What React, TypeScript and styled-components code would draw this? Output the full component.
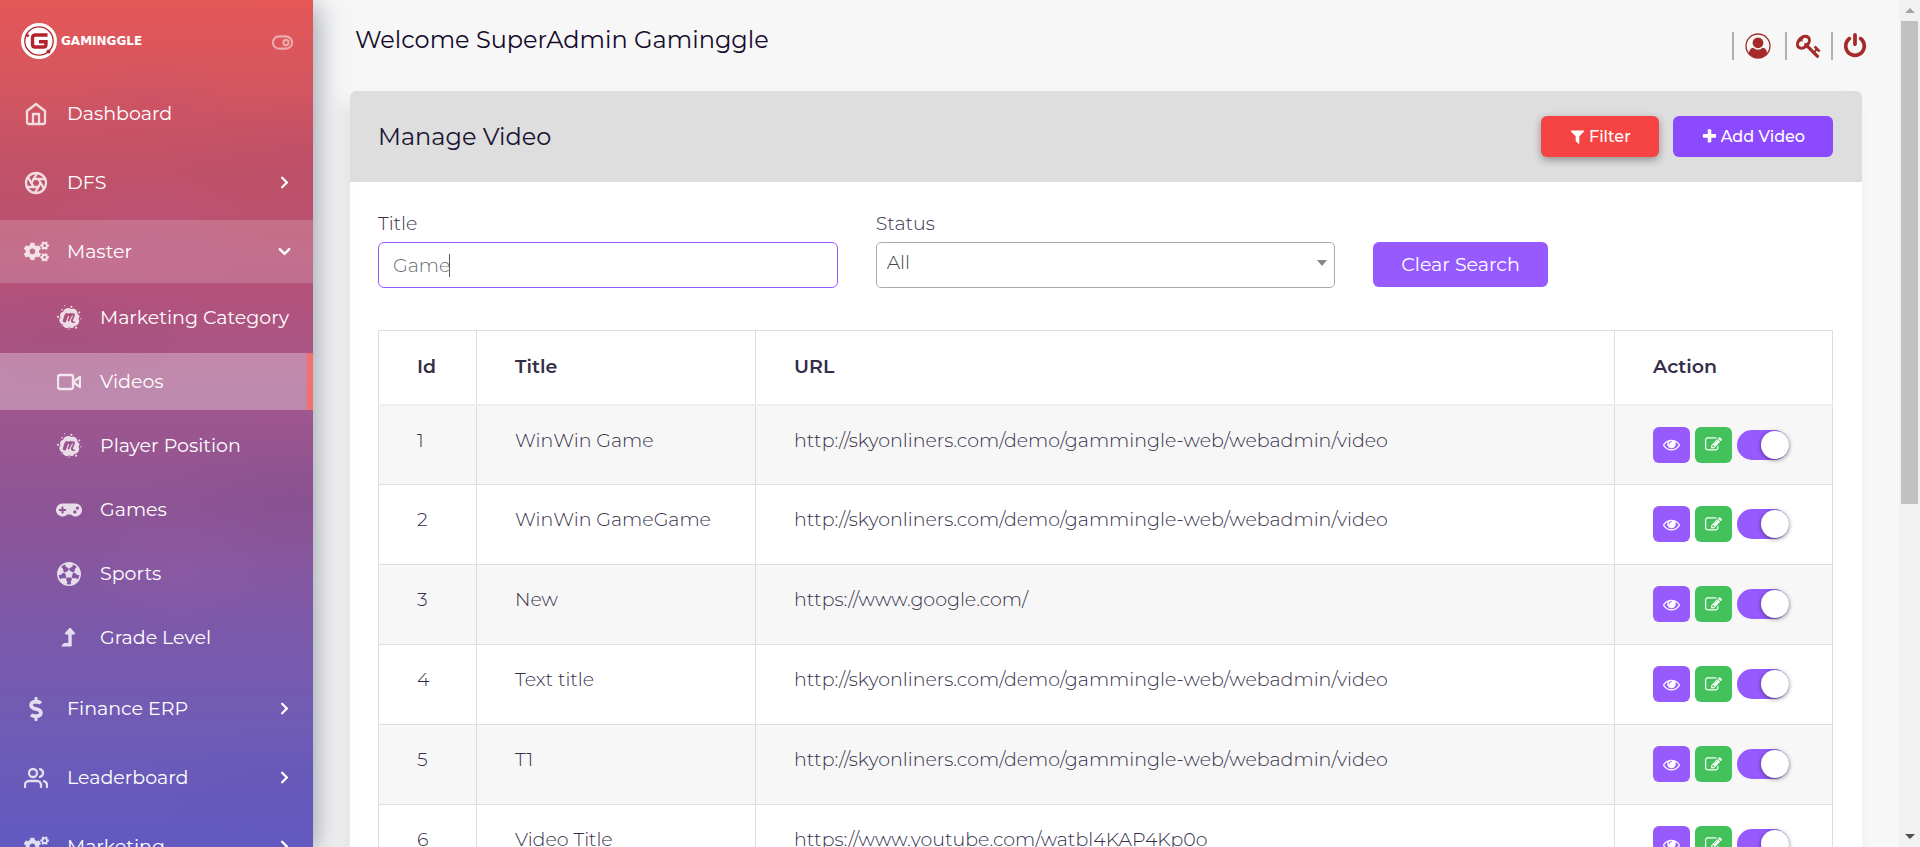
import React, { useState } from "react";
import styled, { createGlobalStyle, css } from "styled-components";
import { FiHome, FiAperture, FiUsers, FiVideo, FiToggleRight, FiChevronRight, FiChevronDown } from "react-icons/fi";
import { FaCogs, FaMeetup, FaGamepad, FaDollarSign } from "react-icons/fa";

const GlobalStyle = createGlobalStyle`
  *, *::before, *::after { box-sizing: border-box; }
  html, body { margin: 0; height: 100%; overflow: hidden; }
  body {
    background: #f7f7f7;
    color: #342e49;
    font-family: Montserrat, Inter, sans-serif;
    font-size: 19px;
    font-weight: 300;
    line-height: 28px;
  }
  button, input, select { font: inherit; }
`;

const Page = styled.div`
  display: flex;
  height: 100vh;
  overflow: hidden;
`;

/* ---------- sidebar ---------- */

const Sidebar = styled.aside`
  position: relative;
  z-index: 1;
  flex: 0 0 313px;
  overflow: hidden;
  color: #fff;
  background:
    radial-gradient(ellipse 90px 40px at 150px 100px, rgba(170, 70, 130, 0.1), transparent),
    radial-gradient(ellipse 160px 60px at 300px 150px, rgba(160, 60, 100, 0.1), transparent),
    radial-gradient(ellipse 120px 70px at 150px 240px, rgba(190, 90, 150, 0.2), transparent),
    radial-gradient(ellipse 160px 60px at 60px 340px, rgba(150, 70, 120, 0.2), transparent),
    radial-gradient(ellipse 140px 70px at 290px 490px, rgba(120, 70, 130, 0.2), transparent),
    radial-gradient(ellipse 120px 70px at 180px 570px, rgba(160, 100, 180, 0.2), transparent),
    radial-gradient(ellipse 150px 60px at 280px 790px, rgba(95, 80, 180, 0.25), transparent),
    linear-gradient(180deg, #e55757 0%, #d45660 10%, #c05168 20%, #b4527a 34%, #a3578c 46%, #8d5495 60%, #7d58a8 73%, #6f5cb6 86%, #6259c0 100%);
`;

const SidebarFrame = styled.div`
  display: flex;
  flex: none;
  position: relative;
  z-index: 1;
  box-shadow: 4px 6px 26px rgba(62, 74, 98, 0.5);
`;

const Brand = styled.header`
  display: flex;
  align-items: center;
  justify-content: space-between;
  height: 82px;
  padding: 0 20px 0 21px;
`;

const BrandLink = styled.a`
  display: flex;
  align-items: center;
  gap: 4px;
  color: #fff;
  font: 700 12px/14px "DejaVu Sans", sans-serif;
  text-decoration: none;
`;

const IconButton = styled.button`
  display: flex;
  padding: 0;
  border: 0;
  background: none;
  color: inherit;
  cursor: pointer;
`;

const MenuToggle = styled(IconButton)`
  padding-top: 2px;
  color: rgba(255, 255, 255, 0.5);
`;

const NavList = styled.ul`
  display: flex;
  flex-direction: column;
  gap: 6px;
  margin: 0;
  padding: 0;
  list-style: none;
`;

const SubList = styled(NavList)`
  gap: 7px;
  padding: 6px 0 5px;
`;

const NavLink = styled.a<{ $sub?: boolean; $open?: boolean; $active?: boolean }>`
  display: flex;
  align-items: center;
  height: ${(p) => (p.$sub ? 57 : 63)}px;
  padding: 0 19px 0 ${(p) => (p.$sub ? 56 : 23)}px;
  color: #fff;
  font-weight: 400;
  text-decoration: none;
  white-space: nowrap;
  ${(p) => p.$open && css`background: rgba(255, 255, 255, 0.17);`}
  ${(p) => p.$active && css`
    background: rgba(255, 255, 255, 0.3);
    border-right: 6px solid #f3706e;
  `}
`;

const NavIcon = styled.span`
  display: flex;
  justify-content: center;
  flex: 0 0 26px;
  margin-right: 18px;
  opacity: 0.8;
`;

const NavText = styled.span`
  flex: 1;
`;

/* ---------- main column ---------- */

const Main = styled.main`
  flex: 1;
  min-width: 0;
  padding: 0 37px;
  overflow: hidden;
`;

const TopBar = styled.header`
  display: flex;
  align-items: center;
  justify-content: space-between;
  height: 91px;
  padding: 0 0 12px 5px;
`;

const Welcome = styled.h1`
  margin: 0;
  color: #140b2b;
  font-size: 24px;
  font-weight: 400;
  line-height: 32px;
`;

const Account = styled.nav`
  display: flex;
  align-items: center;
  padding: 12px 0 0;
`;

const AccountLink = styled.a`
  display: flex;
  justify-content: center;
  height: 28px;
  padding: 0 9px;
  align-items: center;
  border-left: 2px solid #b0b0b0;
  color: #a52a2a;

  &:first-child { padding: 0 14px 0 11px; }
  &:last-child { padding-right: 0; margin-right: -6px; }
`;

const Card = styled.section`
  overflow: hidden;
  border-radius: 6px 6px 0 0;
  background: #fff;
`;

const CardShadow = styled.div`
  border-radius: 6px;
  box-shadow: -8px 12px 18px rgba(25, 42, 70, 0.09);
`;

const CardHeader = styled.header`
  display: flex;
  align-items: center;
  justify-content: space-between;
  height: 91px;
  padding: 0 29px 0 28px;
  background: #dedede;
`;

const CardTitle = styled.h2`
  margin: 0;
  color: #1b1434;
  font-size: 24px;
  font-weight: 400;
  line-height: 32px;
`;

const ButtonRow = styled.div`
  display: flex;
  gap: 14px;
`;

const Button = styled.button<{ $tone: "red" | "violet" | "soft" }>`
  display: flex;
  align-items: center;
  justify-content: center;
  gap: 3px;
  height: ${(p) => (p.$tone === "soft" ? 45 : 41)}px;
  padding: 0 28px;
  border: 0;
  border-radius: 6px;
  color: #fff;
  background: ${(p) => ({ red: "#f64444", violet: "#8c4aff", soft: "#975aff" })[p.$tone]};
  font-size: ${(p) => (p.$tone === "soft" ? 19 : 16)}px;
  font-weight: ${(p) => (p.$tone === "soft" ? 400 : 500)};
  white-space: nowrap;
  cursor: pointer;
  ${(p) => p.$tone === "red" && css`box-shadow: 0 3px 8px rgba(0, 0, 0, 0.35);`}
`;

const CardBody = styled.div`
  padding: 28px 29px 28px 28px;
`;

const Filters = styled.form`
  display: grid;
  grid-template-columns: repeat(3, 1fr);
  gap: 38px;
  align-items: end;
  margin-bottom: 42px;
`;

const Field = styled.label`
  display: flex;
  flex-direction: column;
  gap: 4px;
`;

const FieldName = styled.span`
  line-height: 28px;
`;

const InputWrap = styled.span`
  position: relative;
  display: flex;
`;

const TextInput = styled.input`
  width: 100%;
  height: 46px;
  padding: 1px 14px 0;
  border: 1px solid #975aff;
  border-radius: 6px;
  outline: none;
  background: #fff;
  color: #65686d;
  caret-color: transparent;
`;

const Caret = styled.span`
  position: absolute;
  top: 12px;
  left: 71px;
  width: 1px;
  height: 23px;
  background: #55585d;
`;

const SelectWrap = styled.span`
  display: grid;
  align-items: center;
`;

const Select = styled.select`
  grid-area: 1 / 1;
  width: 100%;
  height: 46px;
  padding: 0 30px 4px 10px;
  border: 1px solid #aaa;
  border-radius: 5px;
  appearance: none;
  background: #fff;
  color: #444;
`;

const SelectArrow = styled.svg`
  grid-area: 1 / 1;
  justify-self: end;
  margin: 0 8px 4px 0;
  pointer-events: none;
`;

const FilterAction = styled.div`
  display: flex;
  padding-bottom: 1px;
`;

const Table = styled.table`
  width: 100%;
  border-collapse: collapse;
  table-layout: fixed;
`;

const HeadCell = styled.th<{ $width: string }>`
  width: ${(p) => p.$width};
  height: 74px;
  padding: 0 0 0 38px;
  border: 1px solid #dedede;
  border-bottom: 2px solid #efefef;
  font-weight: 600;
  text-align: left;
`;

const Row = styled.tr`
  &:nth-child(odd) { background: #f7f7f7; }
`;

const Cell = styled.td`
  height: 80px;
  padding: 21px 0 0 38px;
  border: 1px solid #dedede;
  vertical-align: top;
  white-space: nowrap;
`;

const Actions = styled.div`
  display: flex;
  align-items: center;
  gap: 5px;
`;

const ActionButton = styled(IconButton)<{ $green?: boolean }>`
  align-items: center;
  justify-content: center;
  width: 37px;
  height: 36px;
  border-radius: 6px;
  color: #fff;
  background: ${(p) => (p.$green ? "#43c15a" : "#975aff")};
`;

const Switch = styled.input`
  display: flex;
  justify-content: flex-end;
  width: 52px;
  height: 30px;
  margin: 0;
  padding: 1px 0;
  border-radius: 15px;
  appearance: none;
  background: #dfdfdf;
  cursor: pointer;

  &::before {
    content: "";
    width: 28px;
    height: 28px;
    border-radius: 50%;
    background: #fff;
    box-shadow: 0 1px 4px rgba(0, 0, 0, 0.5);
  }
  &:checked { background: #975aff; }
  &:not(:checked) { justify-content: flex-start; }
`;

/* ---------- scroll rail ---------- */

const ScrollRail = styled.div`
  display: flex;
  flex: 0 0 21px;
  flex-direction: column;
  align-items: center;
  background: #f1f1f1;
`;

const ScrollArrow = styled.span`
  display: flex;
  align-items: center;
  justify-content: center;
  flex: 0 0 21px;
`;

const ScrollTrack = styled.div`
  flex: 1;
  width: 17px;
`;

const ScrollThumb = styled.div`
  height: 60%;
  background: #c1c1c1;
`;

/* ---------- icons ---------- */

const Glyph = ({ size, d }: { size: number; d: string }) => (
  <svg width={size} height={size} viewBox="0 0 1792 1792" fill="currentColor" aria-hidden="true">
    <path d={d} />
  </svg>
);

const EYE = "M1664 960q-152-236-381-353 61 104 61 225 0 185-131.5 316.5t-316.5 131.5-316.5-131.5-131.5-316.5q0-121 61-225-229 117-381 353 133 205 333.5 326.5t434.5 121.5 434.5-121.5 333.5-326.5zm-720-384q0-20-14-34t-34-14q-125 0-214.5 89.5t-89.5 214.5q0 20 14 34t34 14 34-14 14-34q0-86 61-147t147-61q20 0 34-14t14-34zm848 384q0 34-20 69-140 230-376.5 368.5t-499.5 138.5-499.5-139-376.5-368q-20-35-20-69t20-69q140-229 376.5-368t499.5-139 499.5 139 376.5 368q20 35 20 69z";
const EDIT = "M888 1184l116-116-152-152-116 116v56h96v96h56zm440-720q-16-16-33 1l-350 350q-17 17-1 33t33-1l350-350q17-17 1-33zm80 594v190q0 119-84.5 203.5t-203.5 84.5h-832q-119 0-203.5-84.5t-84.5-203.5v-832q0-119 84.5-203.5t203.5-84.5h832q63 0 117 25 15 7 18 23 3 17-9 29l-49 49q-14 14-32 8-23-6-45-6h-832q-66 0-113 47t-47 113v832q0 66 47 113t113 47h832q66 0 113-47t47-113v-126q0-13 9-22l64-64q15-15 35-7t20 29zm-96-738l288 288-672 672h-288v-288zm444 132l-92 92-288-288 92-92q28-28 68-28t68 28l152 152q28 28 28 68t-28 68z";
const FILTER = "M1595 295q17 41-14 70l-493 493v742q0 42-39 59-13 5-25 5-27 0-45-19l-256-256q-19-19-19-45v-486l-493-493q-31-29-14-70 17-39 59-39h1280q42 0 59 39z";
const PLUS = "M1600 736v192q0 40-28 68t-68 28h-416v416q0 40-28 68t-68 28h-192q-40 0-68-28t-28-68v-416h-416q-40 0-68-28t-28-68v-192q0-40 28-68t68-28h416v-416q0-40 28-68t68-28h192q40 0 68 28t28 68v416h416q40 0 68 28t28 68z";
const POWER = "M1664 896q0 156-61 298t-164 245-245 164-298 61-298-61-245-164-164-245-61-298q0-182 80.5-343t226.5-270q43-32 95.5-25t83.5 50q32 42 24.5 94.5t-49.5 84.5q-98 74-151.5 181t-53.5 228q0 104 40.5 198.5t109.5 163.5 163.5 109.5 198.5 40.5 198.5-40.5 163.5-109.5 109.5-163.5 40.5-198.5q0-121-53.5-228t-151.5-181q-42-32-49.5-84.5t24.5-94.5q31-43 84-50t95 25q146 109 226.5 270t80.5 343zm-640-768v640q0 52-38 90t-90 38-90-38-38-90v-640q0-52 38-90t90-38 90 38 38 90z";
const KEY = "M832 512q0-80-56-136t-136-56-136 56-56 136q0 42 19 83-41-19-83-19-80 0-136 56t-56 136 56 136 136 56 136-56 56-136q0-42-19-83 41 19 83 19 80 0 136-56t56-136zm851 704q0 17-49 66t-66 49q-9 0-28.5-16t-36.5-33-38.5-40-24.5-26l-96 96 220 220q28 28 28 68 0 42-39 81t-81 39q-40 0-68-28l-671-671q-176 131-365 131-163 0-265.5-102.5t-102.5-265.5q0-160 95-313t248-248 313-95q163 0 265.5 102.5t102.5 265.5q0 189-131 365l355 355 96-96q-3-3-26-24.5t-40-38.5-33-36.5-16-28.5q0-17 49-66t66-49q13 0 23 10 6 6 46 44.5t82 79.5 86.5 86 73 78 28.5 41z";
const LEVEL_UP = "M1349 597q-18 37-58 37h-192v864q0 14-9 23t-23 9h-704q-21 0-29-18-8-20 4-35l160-192q9-11 25-11h320v-640h-192q-40 0-58-37-17-37 9-68l320-384q18-22 49-22t49 22l320 384q27 32 9 68z";

const UserIcon = () => (
  <svg width="26" height="26" viewBox="0 0 26 26" fill="currentColor" aria-hidden="true">
    <circle cx="13" cy="13" r="12" fill="none" stroke="currentColor" strokeWidth="1.3" />
    <circle cx="13" cy="9.8" r="5.4" />
    <path d="M8.3 14.8C5.6 15 4 17.4 3.8 20.8a12 12 0 0 0 18.4 0c-.2-3.4-1.8-5.8-4.5-6a6.8 6.8 0 0 1-9.4 0z" />
  </svg>
);

const FootballIcon = () => (
  <svg width="24" height="24" viewBox="0 0 24 24" fill="currentColor" aria-hidden="true">
    <circle cx="12" cy="12" r="11.2" fill="none" stroke="currentColor" strokeWidth="1.5" />
    <path d="M12 7.900l4 2.900-1.500 4.600h-5L8 10.800z" />
    {[0, 72, 144, 216, 288].map((angle) => (
      <g key={angle} transform={`rotate(${angle} 12 12)`}>
        <path d="M7.600 1.600L8.600 4.400 12 6.600l3.400-2.200 1-2.800A11.500 11.500 0 0 0 7.600 1.600z" />
        <path d="M12 5v4" stroke="currentColor" strokeWidth="0.700" />
      </g>
    ))}
  </svg>
);

const LogoMark = () => (
  <svg width="36" height="38" viewBox="0 0 36 38" aria-hidden="true">
    <circle cx="18" cy="19" r="18" fill="#fff" />
    <circle cx="18" cy="19" r="14.2" fill="none" stroke="#b3242c" strokeWidth="1.3" />
    <circle cx="6.5" cy="13.5" r="1.6" fill="#b3242c" />
    <circle cx="27.5" cy="29.5" r="2" fill="#b3242c" />
    <path d="M26.500 13H14.500Q11.500 13 11.500 16v6.500q0 2.500 2.500 2.500h8.500q2.500 0 2.500-2.500V19.700h-7" fill="none" stroke="#b3242c" strokeWidth="3.4" />
  </svg>
);

const Triangle = ({ up, color }: { up?: boolean; color: string }) => (
  <svg width="10" height="5" viewBox="0 0 10 5" fill={color} aria-hidden="true">
    <path d={up ? "M0 5 5 0l5 5z" : "M0 0h10L5 5z"} />
  </svg>
);

/* ---------- content ---------- */

type NavItem = { label: string; icon: React.ReactNode; active?: boolean; more?: boolean };

const subItems: NavItem[] = [
  { label: "Marketing Category", icon: <FaMeetup size={25} /> },
  { label: "Videos", icon: <FiVideo size={24} strokeWidth={2.3} />, active: true },
  { label: "Player Position", icon: <FaMeetup size={25} /> },
  { label: "Games", icon: <FaGamepad size={26} /> },
  { label: "Sports", icon: <FootballIcon /> },
  { label: "Grade Level", icon: <Glyph size={24} d={LEVEL_UP} /> },
];

const beforeItems: NavItem[] = [
  { label: "Dashboard", icon: <FiHome size={24} strokeWidth={2.3} /> },
  { label: "DFS", icon: <FiAperture size={24} strokeWidth={2.3} />, more: true },
];

const afterItems: NavItem[] = [
  { label: "Finance ERP", icon: <FaDollarSign size={24} />, more: true },
  { label: "Leaderboard", icon: <FiUsers size={24} strokeWidth={2.3} />, more: true },
  { label: "Marketing", icon: <FaCogs size={25} />, more: true },
];

const DEMO_URL = "http://skyonliners.com/demo/gammingle-web/webadmin/video";

const videos = [
  { id: 1, title: "WinWin Game", url: DEMO_URL },
  { id: 2, title: "WinWin GameGame", url: DEMO_URL },
  { id: 3, title: "New", url: "https://www.google.com/" },
  { id: 4, title: "Text title", url: DEMO_URL },
  { id: 5, title: "T1", url: DEMO_URL },
  { id: 6, title: "Video Title", url: "https://www.youtube.com/watbl4KAP4Kp0o" },
];

const TopItem = ({ item }: { item: NavItem }) => (
  <li>
    <NavLink href="#">
      <NavIcon>{item.icon}</NavIcon>
      <NavText>{item.label}</NavText>
      {item.more && <FiChevronRight size={19} strokeWidth={3} />}
    </NavLink>
  </li>
);

const VideoRow = ({ video }: { video: (typeof videos)[number] }) => (
  <Row>
    <Cell>{video.id}</Cell>
    <Cell>{video.title}</Cell>
    <Cell>{video.url}</Cell>
    <Cell>
      <Actions>
        <ActionButton type="button" aria-label="View"><Glyph size={17} d={EYE} /></ActionButton>
        <ActionButton type="button" aria-label="Edit" $green><Glyph size={17} d={EDIT} /></ActionButton>
        <Switch type="checkbox" defaultChecked aria-label={`${video.title} enabled`} />
      </Actions>
    </Cell>
  </Row>
);

export default function App() {
  const [title, setTitle] = useState("Game");

  return (
    <Page>
      <GlobalStyle />
      <SidebarFrame>
        <Sidebar>
          <Brand>
            <BrandLink href="#"><LogoMark />GAMINGGLE</BrandLink>
            <MenuToggle type="button" aria-label="Toggle menu"><FiToggleRight size={21} strokeWidth={2.3} /></MenuToggle>
          </Brand>
          <NavList>
            {beforeItems.map((item) => <TopItem key={item.label} item={item} />)}
            <li>
              <NavLink href="#" $open>
                <NavIcon><FaCogs size={25} /></NavIcon>
                <NavText>Master</NavText>
                <FiChevronDown size={19} strokeWidth={3} />
              </NavLink>
              <SubList>
                {subItems.map((item) => (
                  <li key={item.label}>
                    <NavLink href="#" $sub $active={item.active}>
                      <NavIcon>{item.icon}</NavIcon>
                      <NavText>{item.label}</NavText>
                    </NavLink>
                  </li>
                ))}
              </SubList>
            </li>
            {afterItems.map((item) => <TopItem key={item.label} item={item} />)}
          </NavList>
        </Sidebar>
      </SidebarFrame>

      <Main>
        <TopBar>
          <Welcome>Welcome SuperAdmin Gaminggle</Welcome>
          <Account aria-label="Account">
            <AccountLink href="#" aria-label="Profile"><UserIcon /></AccountLink>
            <AccountLink href="#" aria-label="Change password"><Glyph size={26} d={KEY} /></AccountLink>
            <AccountLink href="#" aria-label="Log out"><Glyph size={26} d={POWER} /></AccountLink>
          </Account>
        </TopBar>
        <CardShadow>
          <Card>
            <CardHeader>
              <CardTitle>Manage Video</CardTitle>
              <ButtonRow>
                <Button type="button" $tone="red"><Glyph size={17} d={FILTER} />Filter</Button>
                <Button type="button" $tone="violet"><Glyph size={17} d={PLUS} />Add Video</Button>
              </ButtonRow>
            </CardHeader>
            <CardBody>
              <Filters onSubmit={(e) => e.preventDefault()}>
                <Field>
                  <FieldName>Title</FieldName>
                  <InputWrap>
                    <TextInput type="text" value={title} onChange={(e) => setTitle(e.target.value)} />
                    <Caret aria-hidden="true" />
                  </InputWrap>
                </Field>
                <Field>
                  <FieldName>Status</FieldName>
                  <SelectWrap>
                    <Select defaultValue="All">
                      <option>All</option>
                      <option>Active</option>
                      <option>Inactive</option>
                    </Select>
                    <SelectArrow width="10" height="6" viewBox="0 0 10 6" fill="#888" aria-hidden="true">
                      <path d="M0 0h10L5 6z" />
                    </SelectArrow>
                  </SelectWrap>
                </Field>
                <FilterAction>
                  <Button type="button" $tone="soft" onClick={() => setTitle("")}>Clear Search</Button>
                </FilterAction>
              </Filters>
              <Table>
                <thead>
                  <tr>
                    <HeadCell $width="98px">Id</HeadCell>
                    <HeadCell $width="279px">Title</HeadCell>
                    <HeadCell $width="auto">URL</HeadCell>
                    <HeadCell $width="218px">Action</HeadCell>
                  </tr>
                </thead>
                <tbody>
                  {videos.map((video) => <VideoRow key={video.id} video={video} />)}
                </tbody>
              </Table>
            </CardBody>
          </Card>
        </CardShadow>
      </Main>

      <ScrollRail aria-hidden="true">
        <ScrollArrow><Triangle up color="#a3a3a3" /></ScrollArrow>
        <ScrollTrack><ScrollThumb /></ScrollTrack>
        <ScrollArrow><Triangle color="#505050" /></ScrollArrow>
      </ScrollRail>
    </Page>
  );
}
